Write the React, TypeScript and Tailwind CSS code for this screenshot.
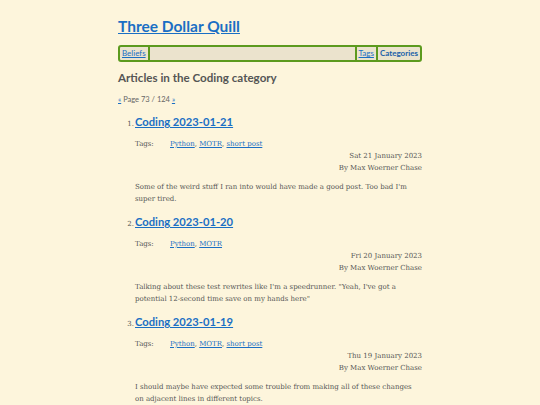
import React from "react";

const head = { fontFamily: "Lato, 'Open Sans', sans-serif" };
const body = { fontFamily: "'DejaVu Serif', serif" };

const posts = [
  {
    n: 1,
    title: "Coding 2023-01-21",
    tags: ["Python", "MOTR", "short post"],
    date: "Sat 21 January 2023",
    summary: "Some of the weird stuff I ran into would have made a good post. Too bad I'm super tired.",
  },
  {
    n: 2,
    title: "Coding 2023-01-20",
    tags: ["Python", "MOTR"],
    date: "Fri 20 January 2023",
    summary: "Talking about these test rewrites like I'm a speedrunner. \"Yeah, I've got a potential 12-second time save on my hands here\"",
  },
  {
    n: 3,
    title: "Coding 2023-01-19",
    tags: ["Python", "MOTR", "short post"],
    date: "Thu 19 January 2023",
    summary: "I should maybe have expected some trouble from making all of these changes on adjacent lines in different topics.",
  },
];

export default function App() {
  return (
    <div className="min-h-screen bg-[#fdf5dc] text-[#555]">
      <div className="w-[304px] mx-auto pt-[14px]">
        <h1 style={head} className="text-[15.5px] font-bold leading-[24px]">
          <a href="#" className="text-[#1a6fc4] underline">Three Dollar Quill</a>
        </h1>
        <nav style={head} className="mt-[7px] h-[17px] border-2 border-[#5c9a1e] rounded-[3px] bg-[#ebe3cd] flex items-stretch text-[8px] leading-[13px]">
          <a href="#" className="px-[2px] text-[#1a6fc4] underline border-r-2 border-[#5c9a1e]">Beliefs</a>
          <div className="flex-1" />
          <a href="#" className="px-[2px] text-[#1a6fc4] underline border-l-2 border-[#5c9a1e]">Tags</a>
          <a href="#" className="px-[2px] text-[#1a5fa8] font-bold border-l-2 border-[#5c9a1e]">Categories</a>
        </nav>
        <h2 style={head} className="mt-[8px] text-[11.6px] font-bold leading-[16px] text-[#555]">Articles in the Coding category</h2>
        <p style={head} className="mt-[9px] text-[7.5px] leading-[10px] text-[#666]">
          <a href="#" className="text-[#1a6fc4] underline">«</a> Page 73 / 124 <a href="#" className="text-[#1a6fc4] underline">»</a>
        </p>
        <ol className="mt-[8px]">
          {posts.map((p) => (
            <li key={p.n} className="mb-[8px]">
              <div className="flex items-baseline">
                <span style={body} className="w-[17px] text-right pr-[1px] text-[7px]">{p.n}.</span>
                <a href="#" style={head} className="text-[11.2px] font-bold leading-[18px] text-[#1a6fc4] underline">{p.title}</a>
              </div>
              <div style={body} className="pl-[17px] text-[7px] leading-[12px]">
                <div className="mt-[7px] flex">
                  <span className="w-[35px]">Tags:</span>
                  <span>
                    {p.tags.map((t, i) => (
                      <React.Fragment key={t}>
                        <a href="#" className="text-[#1a6fc4] underline">{t}</a>
                        {i < p.tags.length - 1 ? ", " : ""}
                      </React.Fragment>
                    ))}
                  </span>
                </div>
                <div className="text-right">{p.date}</div>
                <div className="text-right">By Max Woerner Chase</div>
                <p className="mt-[7px]">{p.summary}</p>
              </div>
            </li>
          ))}
        </ol>
      </div>
    </div>
  );
}
